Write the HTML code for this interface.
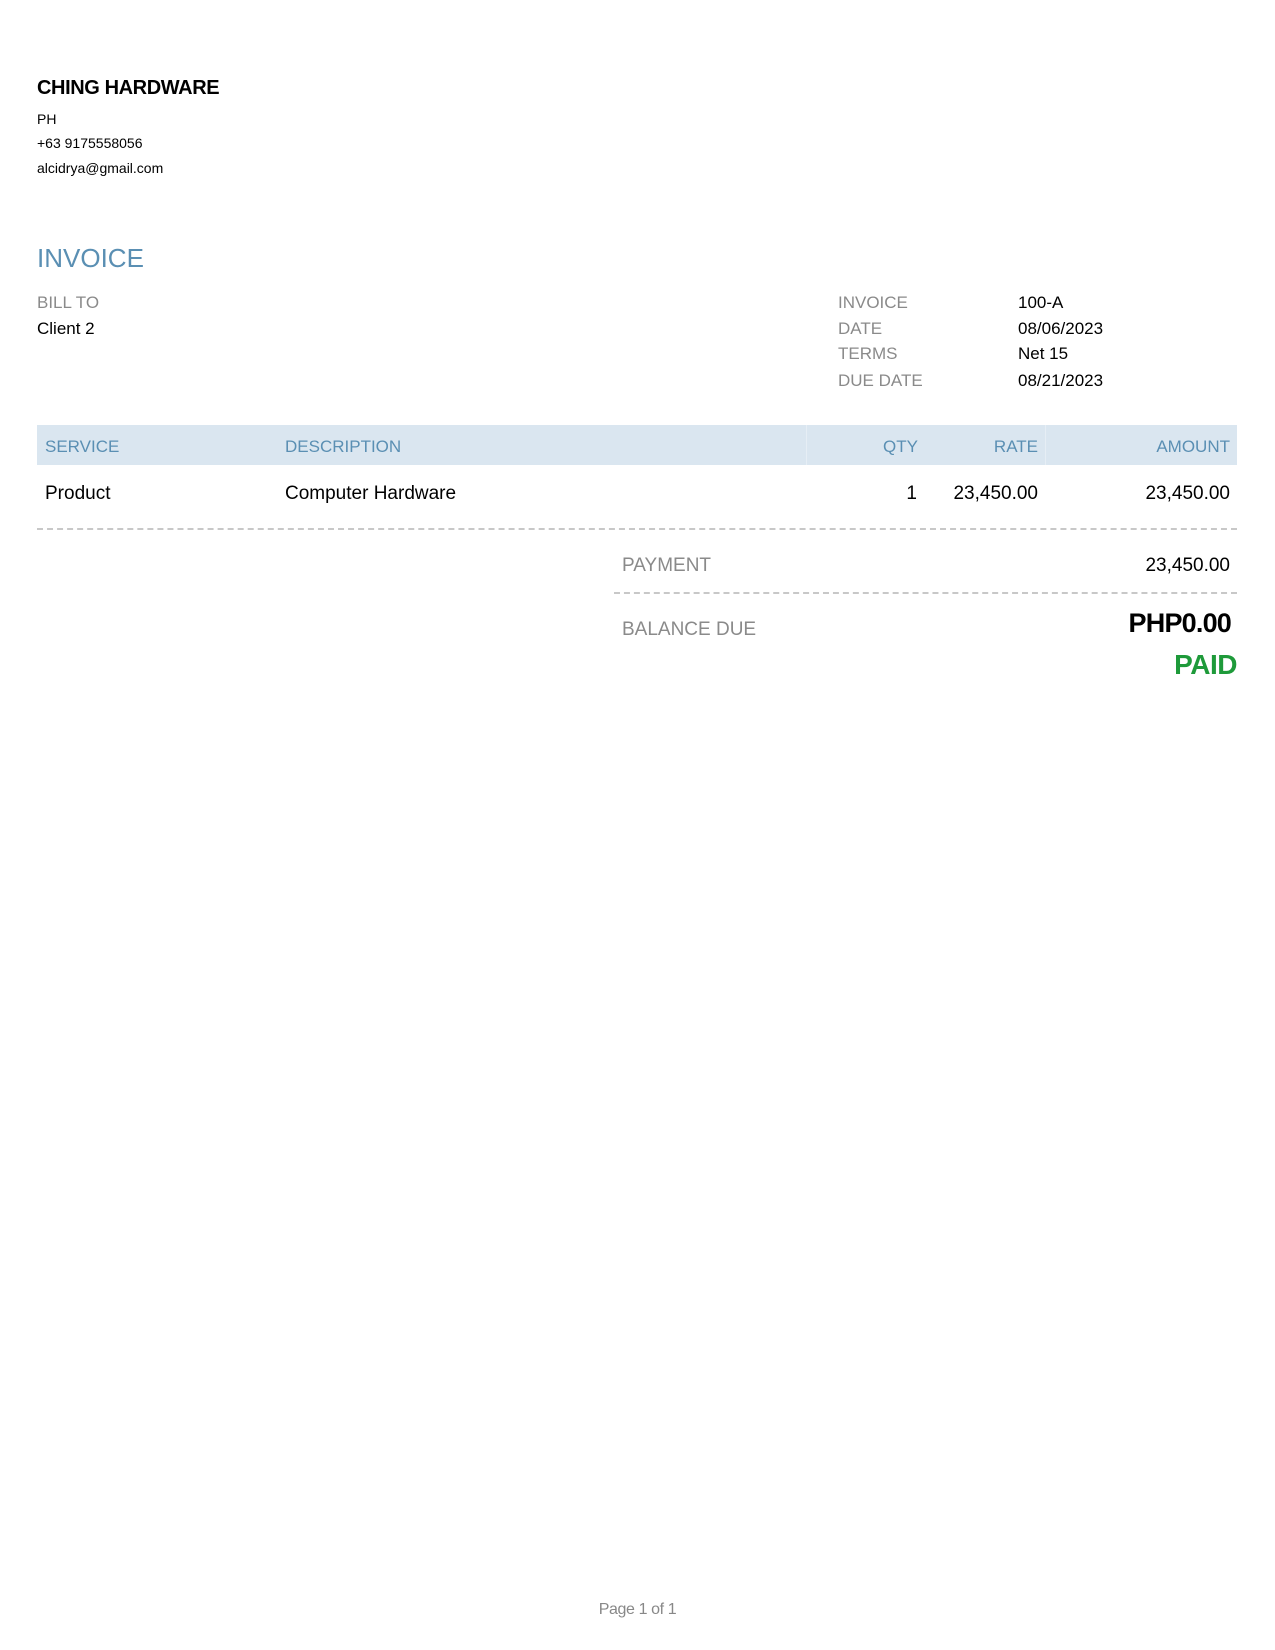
<!DOCTYPE html>
<html><head><meta charset="utf-8"><style>
body{margin:0;width:1275px;height:1650px;background:#fff;font-family:"Liberation Sans",Arial,sans-serif;position:relative;color:#000}
.a{position:absolute;white-space:nowrap;line-height:1}
.g{color:#8a8a8a}
.b{color:#5a8fb3}
.r{text-align:right}
</style></head><body>
<div class="a" style="left:37px;top:78px;font-size:20px;font-weight:bold;letter-spacing:-0.4px">CHING HARDWARE</div>
<div class="a" style="left:37px;top:112px;font-size:14px">PH</div>
<div class="a" style="left:37px;top:136px;font-size:14px">+63 9175558056</div>
<div class="a" style="left:37px;top:161px;font-size:14px">alcidrya@gmail.com</div>
<div class="a b" style="left:37px;top:245px;font-size:26px">INVOICE</div>
<div class="a g" style="left:37px;top:294px;font-size:17px">BILL TO</div>
<div class="a" style="left:37px;top:320px;font-size:17px">Client 2</div>
<div class="a g" style="left:838px;top:294px;font-size:17px">INVOICE</div>
<div class="a" style="left:1018px;top:294px;font-size:17px">100-A</div>
<div class="a g" style="left:838px;top:320px;font-size:17px">DATE</div>
<div class="a" style="left:1018px;top:320px;font-size:17px">08/06/2023</div>
<div class="a g" style="left:838px;top:345px;font-size:17px">TERMS</div>
<div class="a" style="left:1018px;top:345px;font-size:17px">Net 15</div>
<div class="a g" style="left:838px;top:372px;font-size:17px">DUE DATE</div>
<div class="a" style="left:1018px;top:372px;font-size:17px">08/21/2023</div>
<div style="position:absolute;left:37px;top:425px;width:1200px;height:40px;background:#dae6f0"></div>
<div style="position:absolute;left:806px;top:425px;width:1px;height:40px;background:#e6eef5"></div>
<div style="position:absolute;left:1045px;top:425px;width:1px;height:40px;background:#e6eef5"></div>
<div class="a b" style="left:45px;top:438px;font-size:17px">SERVICE</div>
<div class="a b" style="left:285px;top:438px;font-size:17px">DESCRIPTION</div>
<div class="a b r" style="right:357px;top:438px;font-size:17px">QTY</div>
<div class="a b r" style="right:237px;top:438px;font-size:17px">RATE</div>
<div class="a b r" style="right:45px;top:438px;font-size:17px">AMOUNT</div>
<div class="a" style="left:45px;top:484px;font-size:19px">Product</div>
<div class="a" style="left:285px;top:484px;font-size:19px">Computer Hardware</div>
<div class="a r" style="right:358px;top:484px;font-size:19px">1</div>
<div class="a r" style="right:237px;top:484px;font-size:19px">23,450.00</div>
<div class="a r" style="right:45px;top:484px;font-size:19px">23,450.00</div>
<div style="position:absolute;left:37px;top:528px;width:1200px;border-top:2px dashed #c8c8c8"></div>
<div class="a g" style="left:622px;top:556px;font-size:19px">PAYMENT</div>
<div class="a r" style="right:45px;top:556px;font-size:19px">23,450.00</div>
<div style="position:absolute;left:614px;top:592px;width:623px;border-top:2px dashed #c8c8c8"></div>
<div class="a g" style="left:622px;top:620px;font-size:19px">BALANCE DUE</div>
<div class="a r" style="right:44px;top:610px;font-size:27px;font-weight:bold;letter-spacing:-0.8px">PHP0.00</div>
<div class="a r" style="right:38px;top:651px;font-size:28px;font-weight:bold;color:#1e9a3a;letter-spacing:-0.5px">PAID</div>
<div class="a g" style="left:0;width:1275px;text-align:center;top:1602px;font-size:16px;color:#888;letter-spacing:-0.4px">Page 1 of 1</div>
</body></html>
